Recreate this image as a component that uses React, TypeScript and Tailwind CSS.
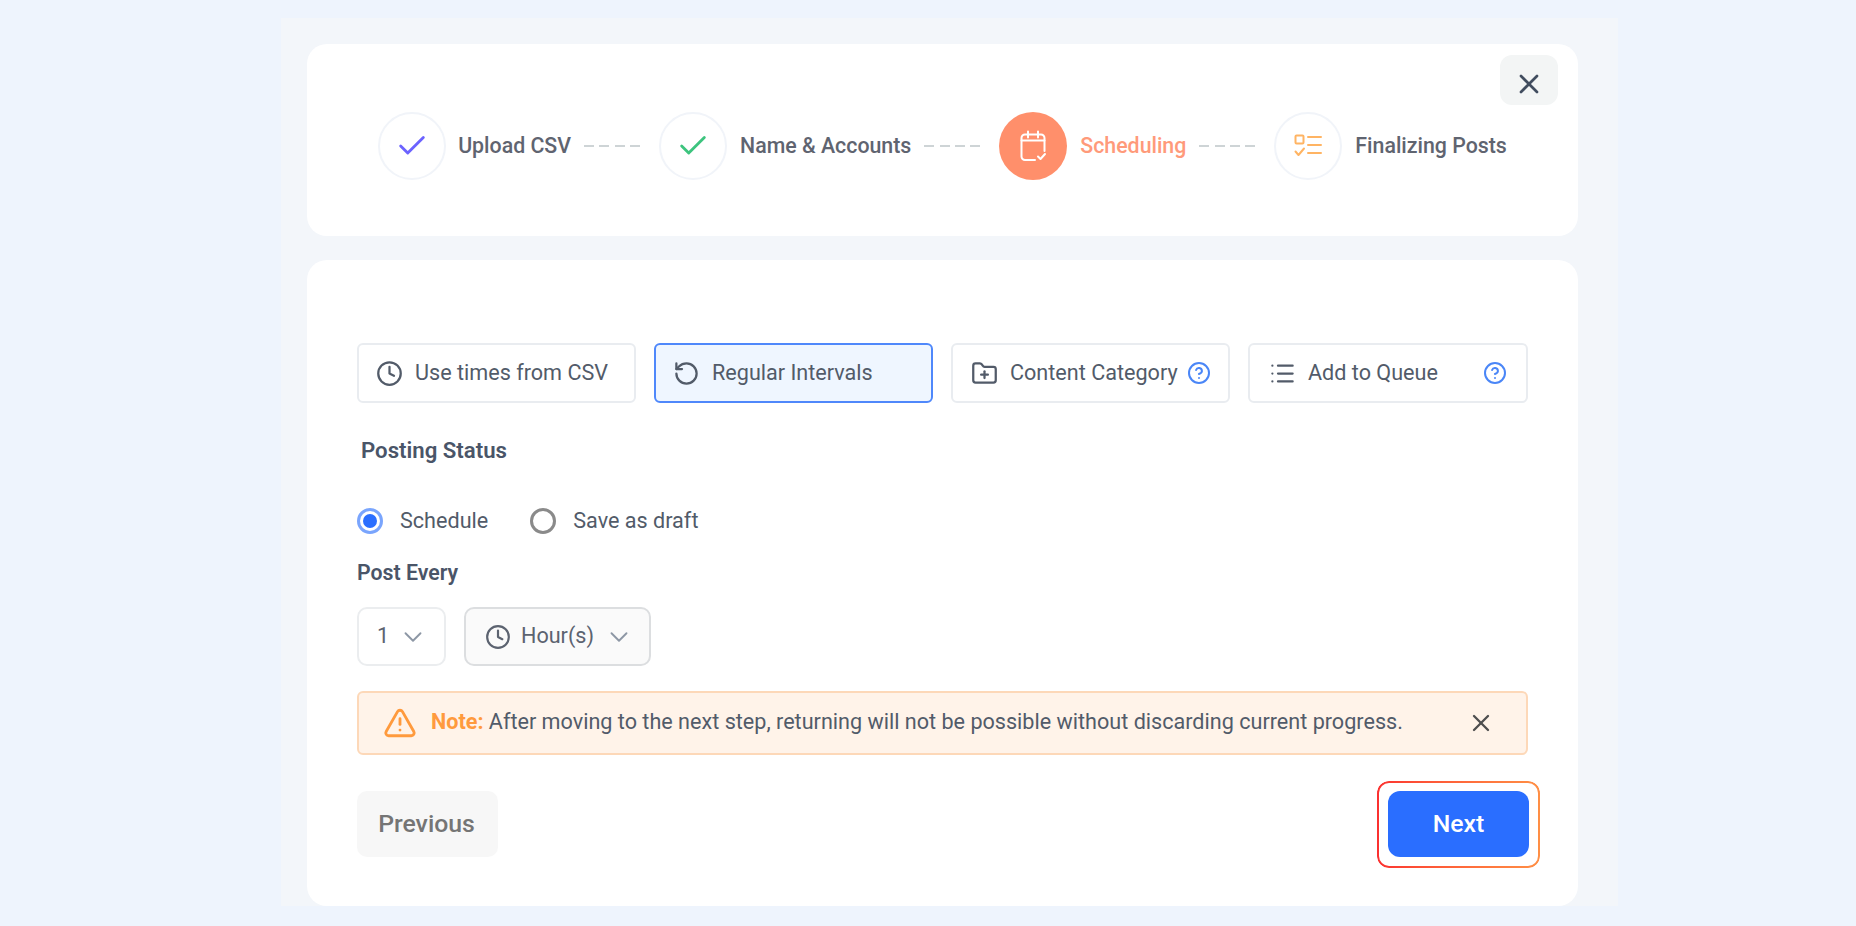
import { Check, ChevronDown, CircleHelp, Clock, FolderPlus, List, RotateCcw, TriangleAlert, X } from "lucide-react";
import type { ReactNode } from "react";

function CalendarDoneIcon() {
	return (
		<svg width="28" height="32" viewBox="0 0 28 32" fill="none" stroke="white" strokeWidth="2" strokeLinecap="round" strokeLinejoin="round">
			<path d="M16 30H6a3.5 3.5 0 0 1-3.5-3.5V8A3.5 3.5 0 0 1 6 4.500h16A3.500 3.500 0 0 1 25.500 8v13" />
			<path d="M2.500 10.500h23" />
			<path d="M9 1.500v6M19 1.500v6" />
			<path d="M19 26.500l2.500 2.500 4.500-5" />
		</svg>
	);
}

function ChecklistIcon() {
	return (
		<svg width="28" height="24" viewBox="0 0 28 24" fill="none" stroke="#ffb463" strokeWidth="2" strokeLinecap="round" strokeLinejoin="round">
			<rect x="1.500" y="1.500" width="8" height="8" rx="1" />
			<path d="M14 3h13M14 11h13M14 19h13" />
			<path d="M1.500 17.500l3 3.500 5.500-6.500" />
		</svg>
	);
}

function Dashes() {
	return (
		<div className="ml-[13px] mr-[19px] flex w-[56px] justify-between">
			<span className="h-[2px] w-[10px] bg-[#ced4d6]" />
			<span className="h-[2px] w-[10px] bg-[#ced4d6]" />
			<span className="h-[2px] w-[10px] bg-[#ced4d6]" />
			<span className="h-[2px] w-[10px] bg-[#ced4d6]" />
		</div>
	);
}

function Step({ icon, label, active, tight }: { icon: ReactNode; label: string; active?: boolean; tight?: boolean }) {
	return (
		<div className={tight ? "flex items-center gap-[12px]" : "flex items-center gap-[13px]"}>
			<div
				className={
					active
						? "flex h-[68px] w-[68px] items-center justify-center rounded-full bg-[#ff8f6b]"
						: "flex h-[68px] w-[68px] items-center justify-center rounded-full border-2 border-[#f1f4f9] bg-white"
				}
			>
				{icon}
			</div>
			<span
				className={
					active
						? "text-[21.33px] font-medium text-[#ff9a7a]"
						: "text-[21.33px] font-medium text-[#5f6470]"
				}
			>
				{label}
			</span>
		</div>
	);
}

function Tab({ icon, label, help, active }: { icon: ReactNode; label: string; help?: ReactNode; active?: boolean }) {
	return (
		<div
			className={
				active
					? "flex h-[60px] items-center rounded-[6px] border-2 border-[#4f88fb] bg-[#eff6ff] pl-[17px] pr-[19px] text-[#525b69]"
					: "flex h-[60px] items-center rounded-[6px] border-2 border-[#e9ecf0] bg-white pl-[17px] pr-[19px] text-[#525b69]"
			}
		>
			{icon}
			<span className="ml-[12px] mt-px text-[21.6px]">{label}</span>
			{help}
		</div>
	);
}

export default function App() {
	return (
		<div className="min-h-screen bg-[#eef4fd] pl-[281px] pt-[18px] font-['Roboto',sans-serif]">
			<div className="flex h-[888px] w-[1337px] flex-col gap-[24px] bg-[#f3f6fa] pl-[26px] pr-[40px] pt-[26px]">
				<div className="relative flex h-[192px] shrink-0 items-start justify-center rounded-[20px] bg-white pt-[68px]">
					<button
						type="button"
						className="absolute right-[20px] top-[11px] flex h-[50px] w-[58px] items-center justify-center rounded-[12px] bg-[#f3f5f5] pt-[7px] text-[#414d5f]"
					>
						<X size={32} strokeWidth={2} />
					</button>
					<div className="flex items-center">
						<Step tight icon={<Check size={34} strokeWidth={2} className="text-[#6c63ff]" />} label="Upload CSV" />
						<Dashes />
						<Step icon={<Check size={34} strokeWidth={2} className="text-[#3dc47e]" />} label="Name & Accounts" />
						<Dashes />
						<Step active icon={<CalendarDoneIcon />} label="Scheduling" />
						<Dashes />
						<Step icon={<ChecklistIcon />} label="Finalizing Posts" />
					</div>
				</div>

				<div className="flex min-h-0 flex-1 flex-col rounded-[20px] bg-white pl-[50px] pr-[50px] pt-[83px]">
					<div className="grid grid-cols-[279px_279px_279px_280px] gap-[18px]">
						<Tab icon={<Clock size={27} strokeWidth={2} className="text-[#525b69]" />} label="Use times from CSV" />
						<Tab active icon={<RotateCcw size={27} strokeWidth={2} className="text-[#525b69]" />} label="Regular Intervals" />
						<Tab
							icon={<FolderPlus size={27} strokeWidth={2} className="ml-px text-[#525b69]" />}
							label="Content Category"
							help={<CircleHelp size={24} strokeWidth={2} className="-mr-[2px] ml-auto text-[#4a86f7]" />}
						/>
						<Tab
							icon={<List size={27} strokeWidth={2} className="ml-[2px] text-[#525b69]" />}
							label="Add to Queue"
							help={<CircleHelp size={24} strokeWidth={2} className="ml-auto text-[#4a86f7]" />}
						/>
					</div>

					<div className="mt-[36px] pl-[4px] text-[22.2px] font-semibold leading-[22px] text-[#4a5568]">Posting Status</div>

					<div className="mt-[47px] flex items-center gap-[42px] text-[21.6px] leading-[26px] text-[#525b69]">
						<label className="flex items-center gap-[17px]">
							<span className="flex h-[26px] w-[26px] items-center justify-center rounded-full border-[3px] border-[#7aa5fd]">
								<span className="h-[14px] w-[14px] rounded-full bg-[#2a6eff]" />
							</span>
							Schedule
						</label>
						<label className="flex items-center gap-[17px]">
							<span className="h-[26px] w-[26px] rounded-full border-[3px] border-[#8a8a8a]" />
							Save as draft
						</label>
					</div>

					<div className="mt-[28px] text-[21.3px] font-semibold leading-[22px] text-[#4a5568]">Post Every</div>

					<div className="mt-[23px] flex gap-[18px]">
						<div className="flex h-[59px] w-[89px] items-center rounded-[10px] border-2 border-[#ebedef] bg-white pl-[18px] text-[21.6px] text-[#5c6370]">
							1
							<ChevronDown size={30} strokeWidth={1.5} className="ml-[9px] text-[#8d97a5]" />
						</div>
						<div className="flex h-[59px] w-[187px] items-center rounded-[10px] border-2 border-[#dcdee0] bg-[#fafafa] pl-[19px] text-[21.6px] text-[#5c6370]">
							<Clock size={26} strokeWidth={2} className="text-[#5c6370]" />
							<span className="ml-[10px]">Hour(s)</span>
							<ChevronDown size={30} strokeWidth={1.5} className="ml-[10px] text-[#8d97a5]" />
						</div>
					</div>

					<div className="mt-[25px] flex h-[64px] items-center rounded-[6px] border-2 border-[#fdd8b8] bg-[#fff3e9] pl-[24px] pr-[31px] text-[21.6px] text-[#525b69]">
						<TriangleAlert size={34} strokeWidth={2} className="text-[#ff9a3d]" />
						<span className="-mt-px ml-[14px]">
							<span className="font-bold text-[#ff9a3d]">Note:</span> After moving to the next step, returning will not be possible without discarding current progress.
						</span>
						<X size={28} strokeWidth={2} className="-mt-px ml-auto text-[#4f4f4f]" />
					</div>

					<div className="mt-[36px] flex items-center justify-between">
						<button type="button" className="h-[66px] w-[141px] rounded-[10px] bg-[#f7f7f7] pr-[2px] text-[24.8px] font-medium text-[#757575]">
							Previous
						</button>
						<div className="relative -mr-px">
							<button type="button" className="h-[66px] w-[141px] rounded-[12px] bg-[#2a6eff] text-[24.8px] font-medium text-white">
								Next
							</button>
							<div className="pointer-events-none absolute -bottom-[11px] -inset-x-[11px] -top-[10px] rounded-[12px] bg-gradient-to-r from-[#fb3030] to-[#ff8f45] p-[2px] [mask:linear-gradient(#000_0_0)_content-box_exclude,linear-gradient(#000_0_0)]" />
						</div>
					</div>
				</div>
			</div>
		</div>
	);
}
